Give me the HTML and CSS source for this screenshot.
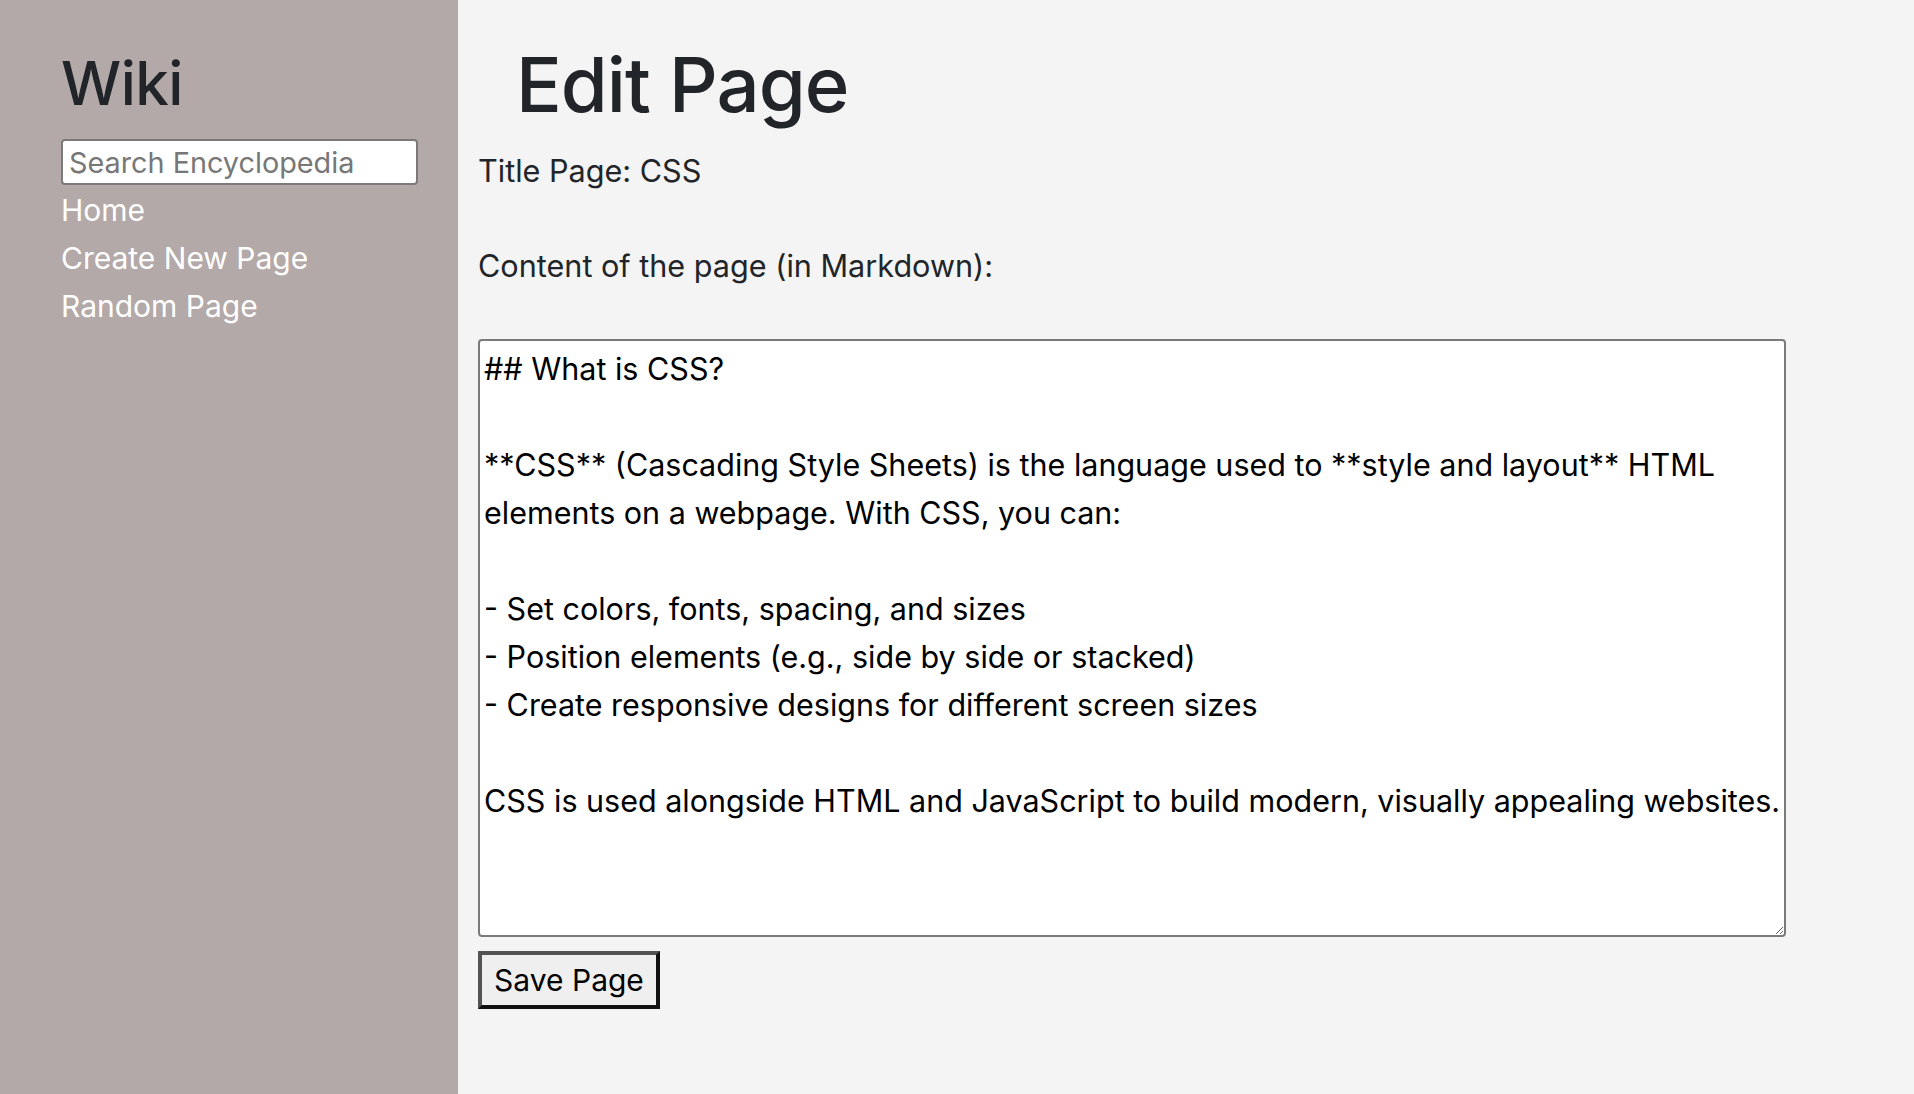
FILE: index.html
```html
<!DOCTYPE html>
<html lang="en">
<head>
<meta charset="utf-8">
<title>Edit Page</title>
<link rel="stylesheet" href="styles.css">
</head>
<body>
<div class="layout">
  <aside class="sidebar">
    <h2 class="brand">Wiki</h2>
    <form class="search-form">
      <input class="search" type="text" name="q" placeholder="Search Encyclopedia">
    </form>
    <nav class="nav">
      <a class="nav-link" href="#">Home</a>
      <a class="nav-link" href="#">Create New Page</a>
      <a class="nav-link" href="#">Random Page</a>
    </nav>
  </aside>
  <main class="main">
    <h1 class="page-title">Edit Page</h1>
    <form class="edit-form">
      <p class="field-title">Title Page: CSS</p>
      <p class="field-label">Content of the page (in Markdown):</p>
      <textarea class="content" name="content">## What is CSS?

**CSS** (Cascading Style Sheets) is the language used to **style and layout** HTML
elements on a webpage. With CSS, you can:

- Set colors, fonts, spacing, and sizes
- Position elements (e.g., side by side or stacked)
- Create responsive designs for different screen sizes

CSS is used alongside HTML and JavaScript to build modern, visually appealing websites.</textarea>
      <div class="actions">
        <button class="save" type="submit">Save Page</button>
      </div>
    </form>
  </main>
</div>
</body>
</html>
```
FILE: styles.css
```css
html, body {
  margin: 0;
  padding: 0;
  height: 100%;
}
body {
  font-family: Inter, "Liberation Sans", Arial, sans-serif;
  color: #212529;
  background: #f4f4f4;
}
.layout {
  display: flex;
  min-height: 100vh;
}
.sidebar {
  width: 458px;
  flex: 0 0 458px;
  box-sizing: border-box;
  background: #b3a9a8;
  padding: 47px 40px 0 61px;
  display: flex;
  flex-direction: column;
}
.brand {
  margin: 0;
  font-size: 60px;
  line-height: 72px;
  font-weight: 500;
  letter-spacing: -0.5px;
  color: #212529;
}
.search-form {
  margin: 20px 0 0 0;
}
.search {
  display: block;
  box-sizing: border-box;
  width: 357px;
  height: 46px;
  margin: 0;
  padding: 0 6px;
  border: 2px solid #7a7a7a;
  border-radius: 4px;
  background: #fff;
  font-family: Inter, "Liberation Sans", Arial, sans-serif;
  font-size: 28.8px;
  color: #212529;
}
.search::placeholder {
  color: #777;
}
.nav {
  display: flex;
  flex-direction: column;
  margin-top: 1px;
}
.nav-link {
  font-size: 30px;
  line-height: 48px;
  color: #fff;
  text-decoration: none;
}
.main {
  flex: 1;
  padding: 38px 20px 0 20px;
}
.page-title {
  margin: 0;
  padding-left: 38px;
  font-size: 76px;
  line-height: 92px;
  font-weight: 500;
  letter-spacing: -1px;
  color: #212529;
}
.edit-form {
  display: flex;
  flex-direction: column;
  align-items: flex-start;
}
.field-title,
.field-label {
  margin: 0;
  font-size: 30.6px;
  line-height: 44px;
}
.field-title {
  margin-top: 19px;
}
.field-label {
  margin-top: 51px;
}
.content {
  box-sizing: border-box;
  width: 1308px;
  height: 598px;
  margin: 51px 0 0 0;
  padding: 4px 4px;
  border: 2px solid #7a7a7a;
  border-radius: 4px;
  background: #fff;
  color: #000;
  font-family: Inter, "Liberation Sans", Arial, sans-serif;
  font-size: 30.5px;
  line-height: 48px;
  white-space: pre;
  overflow: hidden;
  resize: both;
}
.actions {
  margin-top: 14px;
}
.save {
  box-sizing: border-box;
  width: 182px;
  height: 58px;
  padding: 0;
  border-style: solid;
  border-width: 4px;
  border-color: #535353 #111 #111 #535353;
  background: #efefef;
  color: #000;
  font-family: Inter, "Liberation Sans", Arial, sans-serif;
  font-size: 30px;
}
```
